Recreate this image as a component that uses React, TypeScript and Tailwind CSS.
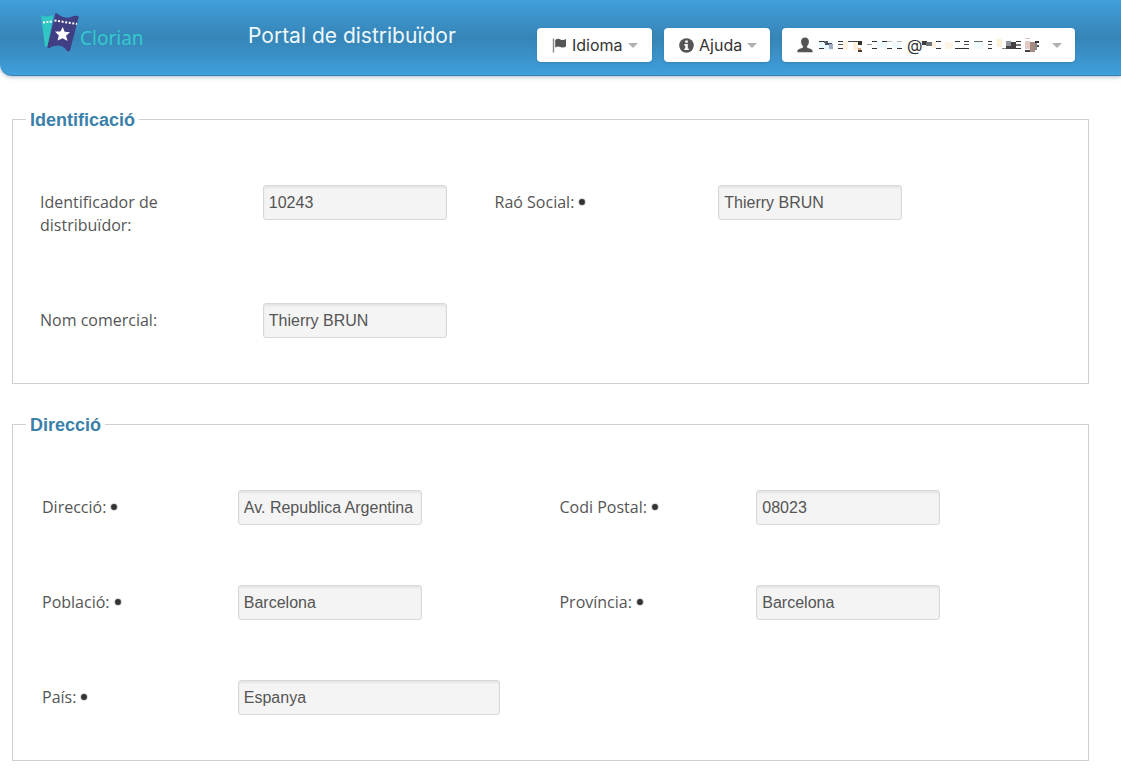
import React from 'react';

type Field = {
  id: string;
  label: string;
  value: string;
  required?: boolean;
  wide?: boolean;
};

const identification: Field[] = [
  { id: 'distributorId', label: 'Identificador de distribuïdor:', value: '10243' },
  { id: 'companyName', label: 'Raó Social:', value: 'Thierry BRUN', required: true },
  { id: 'tradeName', label: 'Nom comercial:', value: 'Thierry BRUN' },
];

const address: Field[] = [
  { id: 'street', label: 'Direcció:', value: 'Av. Republica Argentina', required: true },
  { id: 'zip', label: 'Codi Postal:', value: '08023', required: true },
  { id: 'city', label: 'Població:', value: 'Barcelona', required: true },
  { id: 'province', label: 'Província:', value: 'Barcelona', required: true },
  { id: 'country', label: 'País:', value: 'Espanya', required: true, wide: true },
];

// masked e-mail: [x, y, width, height, color]
type Block = [number, number, number, number, string];

const maskedUser: Block[] = [
  [0, 3, 14, 9, '#e9f8fd'],
  [0, 3, 5, 1, '#333'],
  [5, 3, 4, 2, '#55606a'],
  [0, 10, 5, 1, '#333'],
  [6, 5, 7, 2, '#46505c'],
  [10, 6, 4, 5, '#a3a8c4'],
  [19, 3, 5, 1, '#333'],
  [19, 6, 5, 1, '#555'],
  [19, 10, 5, 1, '#333'],
  [24, 3, 5, 9, '#fff3e2'],
  [29, 3, 10, 1, '#444'],
  [34, 4, 5, 8, '#fdf0dc'],
  [39, 3, 4, 4, '#33302e'],
  [39, 10, 3, 2, '#d8a878'],
  [39, 12, 4, 2, '#4a4038'],
  [48, 6, 5, 1, '#999'],
  [53, 3, 5, 1, '#333'],
  [53, 10, 5, 1, '#333'],
  [58, 4, 10, 6, '#eefafe'],
  [63, 3, 5, 1, '#333'],
  [68, 3, 5, 1, '#bbb'],
  [68, 10, 5, 1, '#333'],
  [73, 4, 9, 6, '#eefafe'],
  [78, 10, 5, 1, '#333'],
  [78, 3, 5, 1, '#bbb'],
];

const maskedDomain: Block[] = [
  [0, 3, 5, 4, '#3c3c3c'],
  [4, 4, 6, 4, '#6f7378'],
  [10, 4, 4, 6, '#fdf0dc'],
  [14, 3, 5, 1, '#333'],
  [14, 10, 5, 1, '#333'],
  [23, 4, 8, 7, '#fff5e6'],
  [33, 3, 5, 1, '#333'],
  [33, 10, 10, 1, '#333'],
  [42, 3, 5, 1, '#333'],
  [42, 6, 5, 1, '#555'],
  [42, 10, 5, 1, '#333'],
  [52, 3, 9, 1, '#666'],
  [52, 4, 9, 7, '#f0fbfe'],
  [66, 3, 4, 1, '#333'],
  [66, 6, 4, 1, '#555'],
  [66, 10, 4, 1, '#333'],
  [75, 1, 5, 8, '#fff0d8'],
  [80, 10, 5, 1, '#888'],
  [84, 3, 5, 5, '#8d939b'],
  [84, 8, 5, 3, '#444'],
  [89, 4, 5, 7, '#463f44'],
  [94, 3, 5, 1, '#333'],
  [94, 6, 5, 2, '#777'],
  [94, 10, 5, 1, '#333'],
  [103, 0, 5, 1, '#d8c6c0'],
  [103, 3, 5, 8, '#e2c9c6'],
  [103, 12, 5, 2, '#4a4240'],
  [108, 4, 5, 10, '#a58c80'],
  [113, 3, 4, 2, '#333'],
  [113, 7, 4, 2, '#555'],
  [113, 5, 2, 7, '#888'],
];

function Blocks({ blocks, width, className }: { blocks: Block[]; width: number; className: string }) {
  return (
    <svg viewBox={`0 0 ${width} 15`} className={className} shapeRendering="crispEdges" aria-hidden="true">
      {blocks.map(([x, y, w, h, fill], i) => (
        <rect key={i} x={x} y={y} width={w} height={h} fill={fill} />
      ))}
    </svg>
  );
}

function Logo() {
  return (
    <svg viewBox="0 0 40 40" className="w-10 h-10 shrink-0" aria-hidden="true">
      <path d="M1 3 Q6 6 12 3 L13 5 L8 34 L5 35 Z" fill="#2fc6c4" />
      <path d="M3 10.5 L12 9.5" stroke="#fff" strokeWidth="1.8" strokeDasharray="2 1.4" />
      <path
        d="M15.5 1 Q17 1 19 3 Q25 7 31 5 Q35 3 38 4 Q39 4 38.500 6 L30 38.500 Q29 40 27 39 Q24 34 19 33.500 Q13 33 9.500 36 Q7 36 7.500 34 Z"
        fill="#403f83"
      />
      <path d="M14.500 8.500 L37 12" stroke="#fff" strokeWidth="2" strokeDasharray="2 1.6" />
      <path
        d="M22.800 15 L24.600 19.800 L30 20.200 L26 23.800 L27.600 29 L22.600 26.200 L17.600 28.600 L18.800 23.400 L15 19.600 L20.400 19.400 Z"
        fill="#fff"
      />
    </svg>
  );
}

function FlagIcon() {
  return (
    <svg viewBox="0 0 15 15" className="w-[15px] h-[15px]" aria-hidden="true">
      <path d="M1.500 0.500 V14.500" stroke="#888" strokeWidth="1.4" />
      <path d="M3.200 2 Q6 0 8.500 1.500 Q11 2.800 14 1 V8.500 Q11 10.300 8.500 9 Q6 7.600 3.200 9.500 Z" fill="#555" />
    </svg>
  );
}

function InfoIcon() {
  return (
    <svg viewBox="0 0 15 15" className="w-[15px] h-[15px]" aria-hidden="true">
      <circle cx="7.500" cy="7.500" r="7.300" fill="#555" />
      <path d="M6.200 2.600 H8.800 V4.800 H6.200 Z M5.300 6 H8.800 V10.600 H9.800 V12 H5.300 V10.600 H6.300 V7.400 H5.300 Z" fill="#fff" />
    </svg>
  );
}

function UserIcon() {
  return (
    <svg viewBox="0 0 16 16" className="w-4 h-4" aria-hidden="true">
      <path
        d="M8 0.500 C10.600 0.500 12 2.200 11.900 4.800 C11.900 6.800 11.200 8.200 10 9.300 V10.600 C11.500 11.600 15.600 12 15.600 14 V15.300 H0.400 V14 C0.400 12 4.500 11.600 6 10.600 V9.300 C4.800 8.200 4.100 6.800 4.100 4.800 C4 2.200 5.400 0.500 8 0.500 Z"
        fill="#555"
      />
    </svg>
  );
}

function Caret() {
  return (
    <svg viewBox="0 0 10 5" className="w-[10px] h-[5px]" aria-hidden="true">
      <path d="M0 0 H10 L5 5 Z" fill="#b0b0b0" />
    </svg>
  );
}

function RequiredMark() {
  return (
    <svg viewBox="0 0 8 8" className="inline-block w-2 h-2 ml-1 mb-1" role="img" aria-label="obligatori">
      <circle cx="4" cy="4" r="3.800" fill="#999" fillOpacity="0.5" />
      <circle cx="4" cy="4" r="2.900" fill="#333" />
    </svg>
  );
}

function MenuButton({ className = '', children }: { className?: string; children: React.ReactNode }) {
  return (
    <button
      type="button"
      className={`flex items-center h-[34px] rounded bg-white text-base text-[#333] shadow-sm cursor-pointer ${className}`}
    >
      {children}
    </button>
  );
}

function FieldGroup({ title, fields, columns }: { title: string; fields: Field[]; columns: string }) {
  return (
    <fieldset className="border border-[#cfcfcf] pb-[45px]">
      <legend className="ml-[13px] px-1 pt-0.5 text-lg leading-6 font-bold text-[#3a80a9] font-['Liberation_Sans',Arial,sans-serif]">
        {title}
      </legend>
      <div className={`grid items-start gap-y-[60px] pt-[53px] pr-7 ${columns}`}>
        {fields.map(field => (
          <React.Fragment key={field.id}>
            <label htmlFor={field.id} className="py-1.5 pr-12 text-base leading-[23px] text-[#555]">
              {field.label}
              {field.required && <RequiredMark />}
            </label>
            <input
              id={field.id}
              type="text"
              readOnly
              defaultValue={field.value}
              className={`h-[35px] rounded-[3px] border border-[#d8d8d8] bg-[#f4f4f4] px-[5px] text-base text-[#555] shadow-[inset_0_2px_2px_#e4e4e4] outline-none font-['Liberation_Sans',Arial,sans-serif] ${field.wide ? 'w-[262px]' : 'w-[184px]'}`}
            />
          </React.Fragment>
        ))}
      </div>
    </fieldset>
  );
}

export default function App() {
  return (
    <div className="min-h-screen bg-white font-['Open_Sans','Noto_Sans',sans-serif]">
      <header className="flex items-start h-[76px] pl-10 pr-[46px] rounded-bl-xl border-b border-[#3580b0] bg-linear-to-b from-[#409fdc] via-[#3685b6] to-[#409fdc] shadow-[0_1px_4px_#a8b8c8] font-['Inter',sans-serif]">
        <a href="#" className="flex items-center w-[208px] pt-3 text-[#35c9cf]">
          <Logo />
          <span className="pt-3 text-[19px] leading-7 font-['Noto_Sans',sans-serif]">Clorian</span>
        </a>
        <h1 className="pt-[22px] text-[21px] leading-7 text-[#eef8fd]">Portal de distribuïdor</h1>
        <nav className="flex gap-3 ml-auto pt-7">
          <MenuButton className="w-[115px] pl-[15px] gap-[5px]">
            <FlagIcon />
            Idioma
            <Caret />
          </MenuButton>
          <MenuButton className="w-[106px] pl-[15px] gap-[5px]">
            <InfoIcon />
            Ajuda
            <Caret />
          </MenuButton>
          <MenuButton className="w-[293px] pl-[15px]">
            <UserIcon />
            <Blocks blocks={maskedUser} width={88} className="w-[88px] h-[15px] ml-1.5" />
            @
            <Blocks blocks={maskedDomain} width={118} className="w-[118px] h-[15px] mr-3" />
            <Caret />
          </MenuButton>
        </nav>
      </header>

      <main className="flex flex-col gap-[27px] pl-3 pr-8 pt-[30px] pb-5">
        <FieldGroup
          title="Identificació"
          fields={identification}
          columns="pl-[27px] grid-cols-[223fr_232fr_224fr_342fr]"
        />
        <FieldGroup
          title="Direcció"
          fields={address}
          columns="pl-[29px] grid-cols-[196fr_322fr_197fr_304fr]"
        />
      </main>
    </div>
  );
}
